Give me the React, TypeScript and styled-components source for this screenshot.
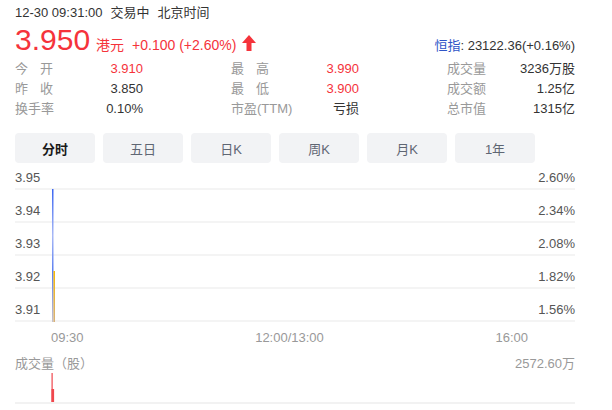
import React from "react";
import styled, { createGlobalStyle } from "styled-components";

const GlobalStyle = createGlobalStyle`
  html, body { margin: 0; padding: 0; background: #fff; }
  body { font-family: "Liberation Sans", Arial, "Noto Sans CJK SC", sans-serif; color: #333; }
`;

const RED = "#f5333b";

const stats = [
  [
    { label: "今开", value: "3.910", red: true },
    { label: "最高", value: "3.990", red: true },
    { label: "成交量", value: "3236万股" },
  ],
  [
    { label: "昨收", value: "3.850" },
    { label: "最低", value: "3.900", red: true },
    { label: "成交额", value: "1.25亿" },
  ],
  [
    { label: "换手率", value: "0.10%" },
    { label: "市盈(TTM)", value: "亏损" },
    { label: "总市值", value: "1315亿" },
  ],
];

const tabs = ["分时", "五日", "日K", "周K", "月K", "1年"];

const axis = [
  { price: "3.95", pct: "2.60%" },
  { price: "3.94", pct: "2.34%" },
  { price: "3.93", pct: "2.08%" },
  { price: "3.92", pct: "1.82%" },
  { price: "3.91", pct: "1.56%" },
];

export default function App() {
  return (
    <>
      <GlobalStyle />
      <Page>
        <TopLine>
          <span>12-30 09:31:00</span>
          <span>交易中</span>
          <span>北京时间</span>
        </TopLine>

        <PriceRow>
          <Price>3.950</Price>
          <Currency>港元</Currency>
          <Change>+0.100 (+2.60%)</Change>
          <UpArrow viewBox="0 0 14 16" width="14" height="16">
            <path d="M7 0 L14 8 L9.5 8 L9.5 16 L4.5 16 L4.5 8 L0 8 Z" fill={RED} />
          </UpArrow>
          <Index>
            <IndexName>恒指</IndexName>: 23122.36(+0.16%)
          </Index>
        </PriceRow>

        <StatsGrid>
          {stats.map((row) =>
            row.map((s) => (
              <StatItem key={s.label}>
                <StatLabel $justify={s.label.length === 2}>{s.label}</StatLabel>
                <StatValue $red={!!s.red}>{s.value}</StatValue>
              </StatItem>
            ))
          )}
        </StatsGrid>

        <Tabs>
          {tabs.map((t, i) => (
            <Tab key={t} $active={i === 0}>
              {t}
            </Tab>
          ))}
        </Tabs>

        <Plot>
          {axis.map((a, i) => (
            <GridRow key={a.price} $first={i === 0}>
              <AxisText>{a.price}</AxisText>
              <AxisText>{a.pct}</AxisText>
            </GridRow>
          ))}
          <PriceLine viewBox="0 0 5 133" width="5" height="133">
            <defs>
              <linearGradient id="blueLine" gradientUnits="userSpaceOnUse" x1="0" y1="0" x2="0" y2="133">
                <stop offset="0" stopColor="#3b66f2" />
                <stop offset="0.35" stopColor="#a9b9f6" />
                <stop offset="0.62" stopColor="#5b7ef0" />
                <stop offset="1" stopColor="#c8c2c8" />
              </linearGradient>
              <linearGradient id="avgLine" gradientUnits="userSpaceOnUse" x1="0" y1="82" x2="0" y2="133">
                <stop offset="0" stopColor="#f8b800" />
                <stop offset="1" stopColor="#d8b27a" />
              </linearGradient>
            </defs>
            <rect x="1" y="0" width="1.5" height="133" fill="url(#blueLine)" />
            <rect x="2.5" y="82" width="1.5" height="51" fill="url(#avgLine)" />
          </PriceLine>
        </Plot>

        <TimeAxis>
          <span>09:30</span>
          <span>12:00/13:00</span>
          <span>16:00</span>
        </TimeAxis>

        <VolumeHeader>
          <span>成交量（股）</span>
          <span>2572.60万</span>
        </VolumeHeader>
        <VolumeBars>
          <svg viewBox="0 0 4 29" width="4" height="29">
            <rect x="0.5" y="0" width="1.2" height="29" fill="#f0474d" />
            <rect x="0.5" y="16" width="2.6" height="13" fill="#f0474d" />
          </svg>
        </VolumeBars>
      </Page>
    </>
  );
}

const Page = styled.div`
  width: 560px;
  padding: 4px 37px 0 15px;
`;

const TopLine = styled.div`
  display: flex;
  gap: 8px;
  font-size: 13px;
  line-height: 18px;
  color: #333;
`;

const PriceRow = styled.div`
  display: flex;
  align-items: baseline;
  height: 36px;
`;

const Price = styled.span`
  font-size: 30px;
  line-height: 36px;
  color: ${RED};
  margin-right: 6px;
`;

const Currency = styled.span`
  font-size: 14px;
  color: ${RED};
  margin-right: 8px;
`;

const Change = styled.span`
  font-size: 14px;
  color: ${RED};
  margin-right: 6px;
`;

const UpArrow = styled.svg`
  align-self: center;
  margin-top: 6px;
`;

const Index = styled.span`
  margin-left: auto;
  font-size: 13px;
  color: #333;
`;

const IndexName = styled.span`
  color: #2f55c7;
`;

const StatsGrid = styled.div`
  display: grid;
  grid-template-columns: repeat(3, 128px);
  justify-content: space-between;
  grid-auto-rows: 20px;
  margin-top: 1px;
  font-size: 13px;
  line-height: 20px;
`;

const StatItem = styled.div`
  display: flex;
  justify-content: space-between;
`;

const StatLabel = styled.span<{ $justify: boolean }>`
  color: #999;
  width: ${(p) => (p.$justify ? "38px" : "auto")};
  text-align: justify;
  text-align-last: ${(p) => (p.$justify ? "justify" : "auto")};
`;

const StatValue = styled.span<{ $red: boolean }>`
  color: ${(p) => (p.$red ? RED : "#333")};
`;

const Tabs = styled.div`
  display: flex;
  gap: 8px;
  margin-top: 14px;
`;

const Tab = styled.div<{ $active: boolean }>`
  width: 80px;
  height: 30px;
  border-radius: 4px;
  background: #f2f3f5;
  display: flex;
  align-items: center;
  justify-content: center;
  font-size: 13px;
  font-weight: ${(p) => (p.$active ? 700 : 400)};
  color: ${(p) => (p.$active ? "#1a1a1a" : "#5f6673")};
`;

const Plot = styled.div`
  position: relative;
`;

const GridRow = styled.div<{ $first: boolean }>`
  height: ${(p) => (p.$first ? 22 : 28)}px;
  border-bottom: 2px solid #f4f4f4;
  display: flex;
  justify-content: space-between;
  align-items: flex-end;
  padding-bottom: 3px;
`;

const AxisText = styled.span`
  font-size: 13px;
  line-height: 15px;
  color: #555;
`;

const PriceLine = styled.svg`
  position: absolute;
  left: 36px;
  top: 26px;
`;

const TimeAxis = styled.div`
  display: flex;
  justify-content: space-between;
  padding: 0 47px 0 36px;
  height: 33px;
  line-height: 31px;
  font-size: 13px;
  color: #999;
`;

const VolumeHeader = styled.div`
  display: flex;
  justify-content: space-between;
  height: 18px;
  line-height: 18px;
  font-size: 13px;
  color: #999;
`;

const VolumeBars = styled.div`
  height: 29px;
  border-bottom: 2px solid #f2f2f2;
  padding-left: 36px;
  display: flex;
  align-items: flex-end;
  svg { display: block; }
`;
